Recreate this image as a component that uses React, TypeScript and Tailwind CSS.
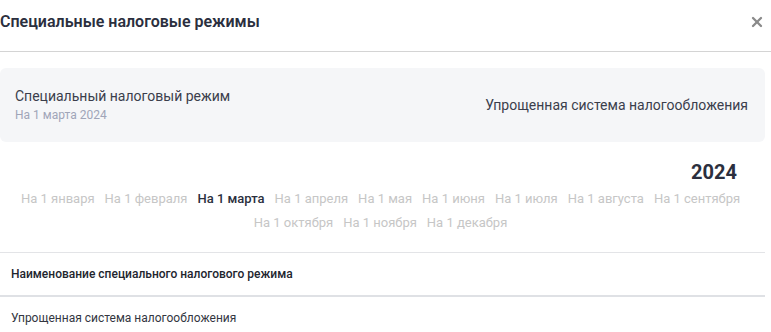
import { X } from "lucide-react";

const months = [
  "На 1 января",
  "На 1 февраля",
  "На 1 марта",
  "На 1 апреля",
  "На 1 мая",
  "На 1 июня",
  "На 1 июля",
  "На 1 августа",
  "На 1 сентября",
  "На 1 октября",
  "На 1 ноября",
  "На 1 декабря",
];

export default function App() {
  const active = "На 1 марта";

  return (
    <div className="w-[771px] h-[332px] overflow-hidden bg-white font-['Roboto',sans-serif]">
      {/* Header */}
      <header className="h-[52px] flex items-center justify-between border-b border-[#d4d4d4]">
        <h1 className="text-[16px] font-semibold text-[#2b2f3e] leading-none -mt-[7px]">
          Специальные налоговые режимы
        </h1>
        <button className="mr-[6px] -mt-[7px] text-[#8a8a8a]">
          <X size={16} strokeWidth={3.5} />
        </button>
      </header>

      <div className="w-[765px] pt-[16px]">
        {/* Current regime card */}
        <div className="h-[74px] rounded-md bg-[#f5f6f8] flex items-center justify-between pl-[15px] pr-[17px]">
          <div className="flex flex-col">
            <span className="text-[14px] text-[#3b3e4c] leading-[18px]">Специальный налоговый режим</span>
            <span className="text-[12px] text-[#a0a5b8] leading-[16px] mt-[2px]">На 1 марта 2024</span>
          </div>
          <span className="text-[14px] text-[#3b3e4c] leading-[18px]">Упрощенная система налогообложения</span>
        </div>

        {/* Year + months */}
        <div className="pt-[18px] pl-[12px] pr-[16px]">
          <div className="flex justify-end pr-[12px]">
            <span className="text-[20px] font-bold text-[#2b2f3e] leading-[24px]">2024</span>
          </div>
          <div className="flex flex-wrap justify-center gap-x-[10px] gap-y-[6px] mt-[6px]">
            {months.map((m) => (
              <span
                key={m}
                className={
                  m === active
                    ? "text-[13px] leading-[18px] font-medium text-[#2b2f3e]"
                    : "text-[13px] leading-[18px] text-[#c6c6c6]"
                }
              >
                {m}
              </span>
            ))}
          </div>
        </div>

        {/* Table */}
        <table className="w-full mt-[20px] border-collapse">
          <thead>
            <tr className="border-t border-[#e3e4e7] border-b-2 border-b-[#dfe1e5]">
              <th className="h-[43px] text-left pl-[11px] text-[12px] font-medium text-[#22252e]">
                Наименование специального налогового режима
              </th>
            </tr>
          </thead>
          <tbody>
            <tr>
              <td className="h-[44px] pl-[11px] text-[12px] text-[#33363f]">
                Упрощенная система налогообложения
              </td>
            </tr>
          </tbody>
        </table>
      </div>
    </div>
  );
}
